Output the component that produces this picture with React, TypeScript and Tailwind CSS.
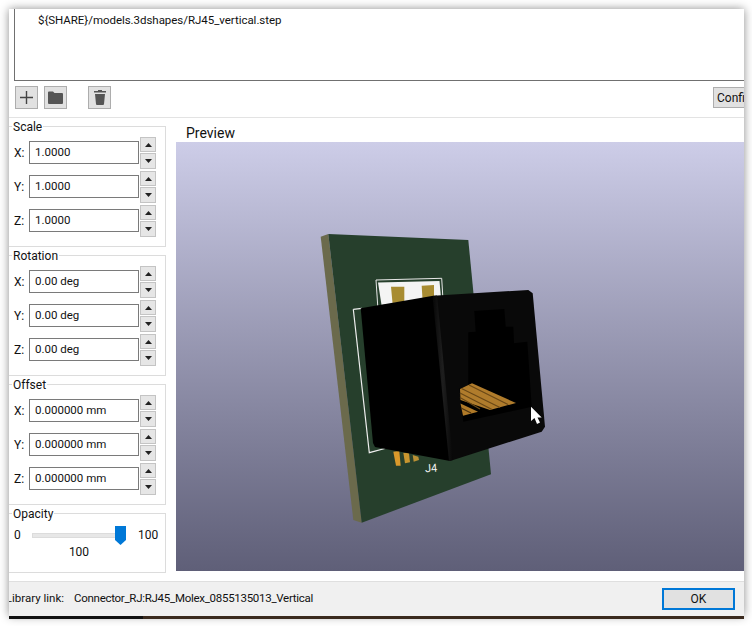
const font = { fontFamily: 'Roboto, "Noto Sans", "Liberation Sans", sans-serif' };

function ToolButton({ children }: { children: React.ReactNode }) {
  return (
    <div className="flex h-[23px] w-[23px] items-center justify-center border border-[#adadad] bg-[#e1e1e1]">
      {children}
    </div>
  );
}

function Spinner() {
  return (
    <div className="flex w-[16px] flex-col gap-px">
      <div className="flex h-[15px] items-center justify-center border border-[#c4c4c4] bg-[#e6e6e6]">
        <svg width="7" height="4" viewBox="0 0 7 4">
          <path d="M3.5 0 7 4H0z" fill="#222" />
        </svg>
      </div>
      <div className="flex h-[16px] items-center justify-center border border-[#c4c4c4] bg-[#e6e6e6]">
        <svg width="7" height="4" viewBox="0 0 7 4">
          <path d="M0 0h7L3.5 4z" fill="#222" />
        </svg>
      </div>
    </div>
  );
}

function Row({ axis, value }: { axis: string; value: string }) {
  return (
    <div className="flex h-[32px] items-center">
      <span className="-mt-px w-[20px] pl-[5px] text-[12px]">{axis}:</span>
      <div className="-mt-px flex h-[23px] w-[110px] items-center border border-[#7a7a7a] bg-white pl-[5px] text-[11.5px]">
        {value}
      </div>
      <div className="ml-px">
        <Spinner />
      </div>
    </div>
  );
}

function Group({ title, rows }: { title: string; rows: string[] }) {
  return (
    <fieldset className="relative h-[121px] w-[157px] border-y border-r border-[#dcdcdc] pt-[10px]">
      <span className="absolute left-[3px] top-[-8px] bg-white px-px text-[12px] leading-[16px]">
        {title}
      </span>
      <div className="flex flex-col gap-[2px]">
        <Row axis="X" value={rows[0]} />
        <Row axis="Y" value={rows[1]} />
        <Row axis="Z" value={rows[2]} />
      </div>
    </fieldset>
  );
}

function OpacityGroup() {
  return (
    <fieldset className="relative h-[60px] w-[157px] border-y border-r border-[#dcdcdc]">
      <span className="absolute left-[3px] top-[-8px] bg-white px-px text-[12px] leading-[16px]">
        Opacity
      </span>
      <div className="mt-[10px] flex h-[22px] items-center text-[12px]">
        <span className="w-[23px] pl-[5px]">0</span>
        <div className="relative h-[5px] w-[89px] border border-[#dcdcdc] bg-[#e7e7e7]">
          <svg
            className="absolute right-[-6px] top-[-8px]"
            width="11"
            height="19"
            viewBox="0 0 11 19"
          >
            <path d="M0 0h11v14l-5.5 5L0 14z" fill="#0078d7" />
          </svg>
        </div>
        <span className="ml-[17px]">100</span>
      </div>
      <div className="w-[140px] text-center text-[12px] leading-[12px]">100</div>
    </fieldset>
  );
}

function Board() {
  return (
    <svg className="block h-[429px] w-[568px]" viewBox="176 142 568 429">
      <defs>
        <linearGradient id="edge" x1="0" x2="1" y1="0" y2="0">
          <stop offset="0" stopColor="#060606" />
          <stop offset="0.5" stopColor="#1e1e1e" />
          <stop offset="1" stopColor="#070707" />
        </linearGradient>
      </defs>
      {/* PCB */}
      <path d="M320.7 236.7 328.3 234 361.7 522.7 353.3 520z" fill="#6b6a4c" />
      <path d="M328.3 234 468.3 240 491 474.3 361.7 522.7z" fill="#263f2c" />
      {/* Top silkscreen and pads */}
      <path d="M376 280 441.7 278.3 443 300 378 310z" fill="none" stroke="#e8e8e8" strokeWidth="1" />
      <path d="M378 282.5 439.5 281 441 298 381.5 305z" fill="#f4f4f4" />
      <path d="M391 286.7 404.3 286.7 404.3 302 392.5 303z" fill="#a88c32" />
      <path d="M421.7 285.7 434 285 434 298 422.5 299z" fill="#a88c32" />
      <path d="M353.3 309.3 369.3 452.7 386.7 448M353.3 309.3 362 308.3" fill="none" stroke="#eeeeee" strokeWidth="1.2" />
      {/* Bottom pads */}
      <path d="M393.3 451.7 399.3 451 400.7 465.7 396 465.7z" fill="#d9992b" />
      <path d="M403.3 452.7 409 453.3 410 462.3 405 463.3z" fill="#c9952f" />
      <path d="M412.7 455 418.3 456.7 419 460 413.7 461.7z" fill="#b98f34" />
      <text x="425" y="472" fill="#f0f0f0" fontSize="11" transform="rotate(-4 430 468)">
        J4
      </text>
      {/* Connector body */}
      <path d="M360.7 308.3 433.3 295.7 450 461 375 447 373 443z" fill="#000" />
      <path d="M433.3 295.7 528.3 290 532.7 293.3 545 426.7 541.7 431.7 450 461z" fill="#090909" />
      <path d="M432.5 296 437 295.6 453 460 449 461z" fill="url(#edge)" />
      {/* Jack opening */}
      <path
        d="M474.3 311 504.3 309 505.7 326.7 513.3 326.7 514 343.3 527.3 341.7 531.7 406.7 463.3 421.7 459.3 388.3 468.3 386.7 468.3 332.3 475.7 331.7z"
        fill="#000"
      />
      {/* Contacts */}
      <path d="M460 389 472 383.3 516 403 490 410 460.5 400z" fill="#b07c2c" />
      <path
        d="M460 393 492 409.5M461.5 388.5 500 407.5M469 385 508 404.5M460 397.5 480 409"
        stroke="#6a4816"
        strokeWidth="1.2"
      />
      <path d="M460.5 403.5 478 411.7 463 415.7z" fill="#b07a28" />
      <path d="M461 408 471 413" stroke="#4c3310" strokeWidth="1.2" />
      {/* Pointer */}
      <path d="M531 406.7V421L534.5 418 537 424 540 422.5 537.5 417.5 541.7 417.5z" fill="#fff" />
    </svg>
  );
}

export default function App() {
  return (
    <div className="h-[626px] w-[752px] overflow-hidden bg-white pl-[9px] pt-[9px] text-[#111]" style={font}>
      <div className="flex h-[607px] w-[735px] flex-col overflow-hidden bg-white shadow-[0_0_9px_rgba(0,0,0,0.45)]">
        <div className="ml-[5px] h-[72px] w-[800px] shrink-0 border-b border-l border-[#707070] pl-[23px] pt-[2px] text-[11.5px] leading-[18px] tracking-[-0.04px]">
          {"${SHARE}/models.3dshapes/RJ45_vertical.step"}
        </div>

        <div className="flex h-[37px] shrink-0 items-start border-b border-[#e3e3e3] pl-[6px] pt-[5px]">
          <ToolButton>
            <svg width="15" height="15" viewBox="0 0 15 15">
              <path d="M7.5 1v13M1 7.5h13" stroke="#444" strokeWidth="1.4" />
            </svg>
          </ToolButton>
          <div className="ml-[6px]">
            <ToolButton>
              <svg width="15" height="13" viewBox="0 0 15 13">
                <path d="M0 1.5Q0 .5 1 .5h4l1.5 1.5H14q1 0 1 1V12q0 1-1 1H1q-1 0-1-1z" fill="#555" />
              </svg>
            </ToolButton>
          </div>
          <div className="ml-[21px]">
            <ToolButton>
              <svg width="12" height="15" viewBox="0 0 12 15">
                <path d="M4 0h4v1h4v1.5H0V1h4zM1 4h10l-1 10q0 1-1 1H3q-1 0-1-1z" fill="#555" />
              </svg>
            </ToolButton>
          </div>
          <div className="ml-auto mr-[-31px] mt-px flex h-[21px] w-[62px] shrink-0 items-center border border-[#adadad] bg-[#e1e1e1] pl-[3px] text-[12px]">
            Config
          </div>
        </div>

        <div className="flex h-[463px] shrink-0 pt-[8px]">
          <div className="flex flex-col gap-[8px]">
            <Group title="Scale" rows={["1.0000", "1.0000", "1.0000"]} />
            <Group title="Rotation" rows={["0.00 deg", "0.00 deg", "0.00 deg"]} />
            <Group title="Offset" rows={["0.000000 mm", "0.000000 mm", "0.000000 mm"]} />
            <OpacityGroup />
          </div>
          <div className="ml-[10px] flex-1">
            <div className="h-[16px] pl-[10px] text-[14px] leading-[15px]">Preview</div>
            <div className="h-[429px] bg-gradient-to-b from-[#cdcde8] to-[#5f5f78]">
              <Board />
            </div>
          </div>
        </div>

        <div className="flex h-[35px] shrink-0 items-center border-t border-[#dfdfdf] bg-[#f0f0f0] text-[11.5px]">
          <div className="flex w-[55px] justify-end overflow-hidden whitespace-nowrap">Library link:</div>
          <span className="ml-[10px] whitespace-nowrap tracking-[-0.28px]">Connector_RJ:RJ45_Molex_0855135013_Vertical</span>
          <div className="ml-auto mr-[9px] flex h-[22px] w-[73px] items-center justify-center border-2 border-[#0078d7] bg-[#e1e1e1] text-[12px]">
            OK
          </div>
        </div>
      </div>
      <div className="flex h-[3px] w-[735px]">
        <div className="w-[134px] bg-[#111]" />
        <div className="flex-1 bg-[#3a2a1e]" />
      </div>
    </div>
  );
}
